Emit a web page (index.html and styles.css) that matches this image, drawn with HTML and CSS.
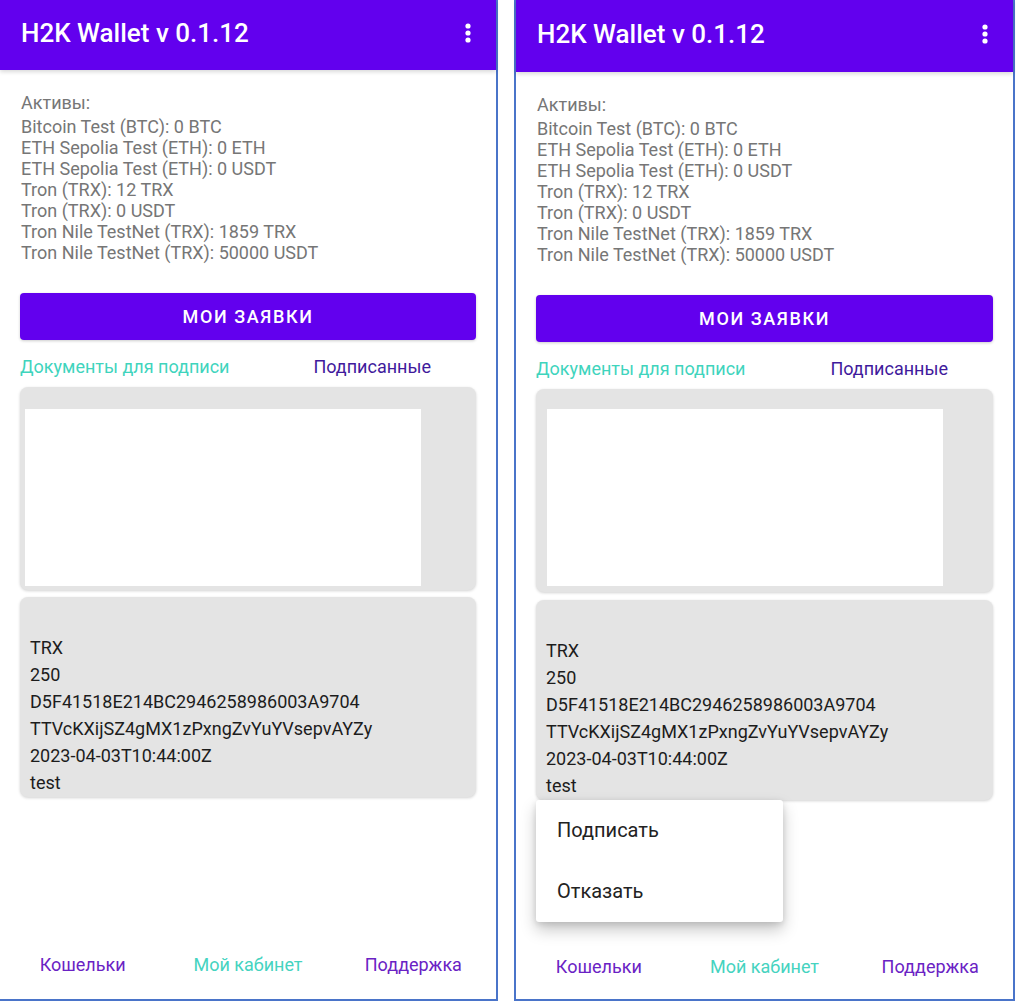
FILE: index.html
```html
<!DOCTYPE html>
<html lang="ru">

<head>
	<meta charset="utf-8">
	<meta name="viewport" content="width=device-width, initial-scale=1.0">
	<title>H2K Wallet</title>
	<link rel="stylesheet" href="styles.css">
</head>

<body>
	<main class="screens">

		<!-- Экран 1: список документов -->
		<section class="phone phone-left">
			<header class="appbar">
				<h1>H2K Wallet v 0.1.12</h1>
				<svg class="kebab" width="8" height="22" viewBox="0 0 8 22">
					<circle cx="4" cy="4" r="2.6" />
					<circle cx="4" cy="11" r="2.6" />
					<circle cx="4" cy="18" r="2.6" />
				</svg>
			</header>

			<div class="content">
				<div class="assets">
					<p class="assets-title">Активы:</p>
					<p>Bitcoin Test (BTC): 0 BTC</p>
					<p>ETH Sepolia Test (ETH): 0 ETH</p>
					<p>ETH Sepolia Test (ETH): 0 USDT</p>
					<p>Tron (TRX): 12 TRX</p>
					<p>Tron (TRX): 0 USDT</p>
					<p>Tron Nile TestNet (TRX): 1859 TRX</p>
					<p>Tron Nile TestNet (TRX): 50000 USDT</p>
				</div>

				<button class="main-btn">МОИ ЗАЯВКИ</button>

				<div class="tabs">
					<span class="tab tab-active">Документы для подписи</span>
					<span class="tab">Подписанные</span>
				</div>

				<div class="card card-doc">
					<div class="doc-preview"></div>
				</div>

				<div class="card card-info">
					<p>&nbsp;</p>
					<p>TRX</p>
					<p>250</p>
					<p>D5F41518E214BC2946258986003A9704</p>
					<p>TTVcKXijSZ4gMX1zPxngZvYuYVsepvAYZy</p>
					<p>2023-04-03T10:44:00Z</p>
					<p>test</p>
				</div>
			</div>

			<nav class="bottom-nav">
				<a class="nav-item">Кошельки</a>
				<a class="nav-item nav-active">Мой кабинет</a>
				<a class="nav-item">Поддержка</a>
			</nav>
		</section>

		<!-- Экран 2: то же самое + всплывающее меню -->
		<section class="phone phone-right">
			<header class="appbar">
				<h1>H2K Wallet v 0.1.12</h1>
				<svg class="kebab" width="8" height="22" viewBox="0 0 8 22">
					<circle cx="4" cy="4" r="2.6" />
					<circle cx="4" cy="11" r="2.6" />
					<circle cx="4" cy="18" r="2.6" />
				</svg>
			</header>

			<div class="content">
				<div class="assets">
					<p class="assets-title">Активы:</p>
					<p>Bitcoin Test (BTC): 0 BTC</p>
					<p>ETH Sepolia Test (ETH): 0 ETH</p>
					<p>ETH Sepolia Test (ETH): 0 USDT</p>
					<p>Tron (TRX): 12 TRX</p>
					<p>Tron (TRX): 0 USDT</p>
					<p>Tron Nile TestNet (TRX): 1859 TRX</p>
					<p>Tron Nile TestNet (TRX): 50000 USDT</p>
				</div>

				<button class="main-btn">МОИ ЗАЯВКИ</button>

				<div class="tabs">
					<span class="tab tab-active">Документы для подписи</span>
					<span class="tab">Подписанные</span>
				</div>

				<div class="card card-doc">
					<div class="doc-preview"></div>
				</div>

				<div class="card card-info">
					<p>&nbsp;</p>
					<p>TRX</p>
					<p>250</p>
					<p>D5F41518E214BC2946258986003A9704</p>
					<p>TTVcKXijSZ4gMX1zPxngZvYuYVsepvAYZy</p>
					<p>2023-04-03T10:44:00Z</p>
					<p>test</p>
				</div>
			</div>

			<nav class="bottom-nav">
				<a class="nav-item">Кошельки</a>
				<a class="nav-item nav-active">Мой кабинет</a>
				<a class="nav-item">Поддержка</a>
			</nav>

			<ul class="popup">
				<li>Подписать</li>
				<li>Отказать</li>
			</ul>
		</section>

	</main>
</body>

</html>
```

FILE: styles.css
```css
body {
	margin: 0;
	background-color: white;
	font-family: Roboto, "Liberation Sans", sans-serif;
}

p {
	margin: 0;
}

/*____________________Screens____________________*/

.screens {
	display: flex;
	gap: 16px;
	height: 1002px;
}

.phone {
	position: relative;
	display: flex;
	flex-direction: column;
	height: 999px;
	border-bottom: 2px solid #4a74c9;
	background-color: white;
}

.phone-left {
	width: 496px;
	border-right: 2px solid #4a74c9;
}

.phone-right {
	width: 497px;
	border-left: 2px solid #4a74c9;
	border-right: 2px solid #4a74c9;
}

/*____________________App bar____________________*/

.appbar {
	display: flex;
	align-items: center;
	justify-content: space-between;
	height: 70px;
	padding: 0 24px 0 21px;
	background-color: #6200ee;
	box-shadow: 0 2px 4px rgba(0, 0, 0, 0.15);
	color: white;
}

.phone-right .appbar {
	height: 72px;
}

.appbar h1 {
	margin: 0 0 4px 0;
	font-size: 26px;
	font-weight: 500;
}

.kebab {
	fill: white;
	margin-bottom: 4px;
}

/*____________________Content____________________*/

.content {
	padding: 0 20px;
}

.assets {
	padding: 22px 0 0 1px;
	font-size: 18px;
	line-height: 21px;
	color: #767676;
}

.assets-title {
	margin-bottom: 3px;
}

.main-btn {
	display: block;
	width: 100%;
	height: 47px;
	margin-top: 30px;
	border: none;
	border-radius: 4px;
	background-color: #6200ee;
	box-shadow: 0 1px 3px rgba(0, 0, 0, 0.2);
	color: white;
	font-family: Roboto, "Liberation Sans", sans-serif;
	font-size: 18px;
	font-weight: 500;
	letter-spacing: 1.6px;
}

.tabs {
	display: flex;
	justify-content: space-between;
	padding-right: 45px;
	margin-top: 16px;
	font-size: 18px;
	line-height: 22px;
}

.tab {
	color: #3f1a9c;
}

.tab-active {
	color: #3fd4bd;
}

/*____________________Cards____________________*/

.card {
	border-radius: 8px;
	background-color: #e4e4e4;
	box-shadow: 0 1px 3px rgba(0, 0, 0, 0.18);
}

.card-doc {
	height: 203px;
	margin-top: 9px;
	padding: 22px 0 0 5px;
	box-sizing: border-box;
}

.phone-right .card-doc {
	padding: 20px 0 0 11px;
}

.doc-preview {
	width: 396px;
	height: 177px;
	background-color: white;
}

.card-info {
	margin-top: 7px;
	padding: 10px 10px 0;
	height: 200px;
	box-sizing: border-box;
	font-size: 18px;
	line-height: 27px;
	color: #1c1c1c;
}

.phone-right .card-info {
	margin-top: 8px;
}

/*____________________Bottom nav____________________*/

.bottom-nav {
	display: grid;
	grid-template-columns: 1fr 1fr 1fr;
	margin-top: auto;
	margin-bottom: 23px;
	font-size: 18px;
	line-height: 22px;
	text-align: center;
}

.phone-right .bottom-nav {
	margin-bottom: 21px;
}

.nav-item {
	color: #6a22c4;
}

.nav-active {
	color: #45d3c0;
}

/*____________________Popup menu____________________*/

.popup {
	position: absolute;
	left: 20px;
	top: 800px;
	width: 247px;
	margin: 0;
	padding: 0;
	list-style: none;
	background-color: white;
	border-radius: 3px;
	box-shadow: 0 8px 16px rgba(0, 0, 0, 0.22), 0 2px 6px rgba(0, 0, 0, 0.12);
	font-size: 20px;
	color: #222;
}

.popup li {
	height: 61px;
	line-height: 61px;
	padding-left: 21px;
}
```
